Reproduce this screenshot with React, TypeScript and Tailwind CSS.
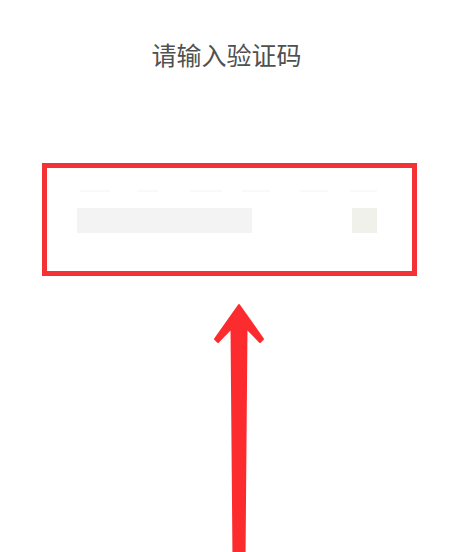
import React from 'react';

const dashes = [
  { left: 33, width: 30 },
  { left: 90, width: 21 },
  { left: 143, width: 32 },
  { left: 195, width: 28 },
  { left: 253, width: 28 },
  { left: 303, width: 27 },
];

function UpArrow() {
  // page coords shifted by the top of this svg (y = 276)
  return (
    <svg width="461" height="276" viewBox="0 276 461 276" className="block">
      <polygon
        points="239,305 263,339 260,342 246.5,328 244.5,560 233.5,560 231.5,328 218,342 215,339"
        fill="#fc2b2e"
        stroke="#fc2b2e"
        strokeWidth="2"
        strokeLinejoin="round"
      />
    </svg>
  );
}

export default function App() {
  return (
    <div className="h-[552px] w-full overflow-hidden bg-white flex flex-col font-['Noto_Sans_CJK_SC','Noto_Sans',sans-serif]">
      <div className="flex justify-center pr-[8px] mt-[37px]">
        <h1 className="text-[25px] leading-[34px] text-[#505050] font-normal">请输入验证码</h1>
      </div>

      <div className="ml-[42px] mt-[92px] w-[375px] h-[113px] border-[5px] border-[#f43236] flex flex-col">
        <div className="relative h-[2px] mt-[22px]">
          {dashes.map((d, i) => (
            <div
              key={i}
              className="absolute top-0 h-[2px] bg-[#f9f9f9]"
              style={{ left: d.left, width: d.width }}
            />
          ))}
        </div>
        <div className="flex items-center mt-[16px] pl-[30px]">
          <div className="w-[175px] h-[25px] bg-[#f3f3f3]" />
          <div className="ml-[100px] w-[25px] h-[25px] bg-[#f1f1ec]" />
        </div>
      </div>

      <UpArrow />
    </div>
  );
}
